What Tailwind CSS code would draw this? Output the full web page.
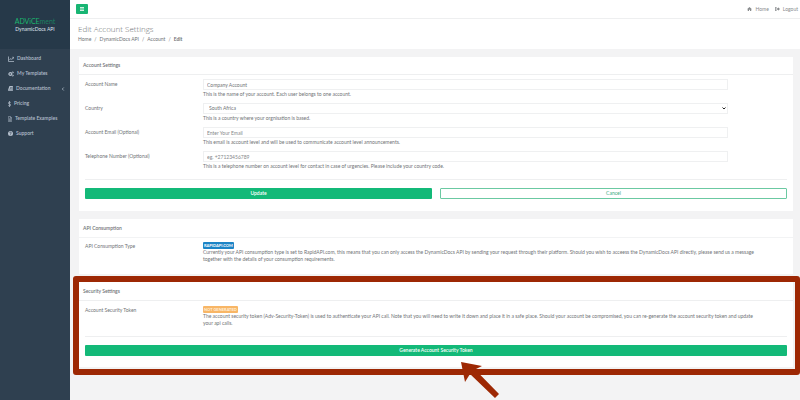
<!DOCTYPE html>
<html lang="en">

<head>
  <meta charset="UTF-8" />
  <meta name="viewport" content="width=device-width, initial-scale=1" />
  <title>Edit Account Settings</title>
  <script src="https://cdn.jsdelivr.net/npm/@tailwindcss/browser@4"></script>
</head>

<body class="flex min-h-screen overflow-x-hidden bg-[#f3f3f4] font-['Lato',sans-serif] text-[5px] leading-[7px] text-[#707376]">

  <!-- Sidebar -->
  <aside class="w-[70px] shrink-0 bg-[#2f4050] text-[#b4bfcc]">
    <div class="flex h-[49px] flex-col items-center justify-center bg-[#263949]">
      <div class="h-2 text-[7px] leading-2 text-[#1ab66e]">ADViCE<span class="text-[#1c8060]">ment</span></div>
      <div class="mt-px text-[#dfe4ed]">DynamicDocs API</div>
    </div>
    <nav class="flex flex-col gap-2 pt-[6px] pr-[5px] pl-2 font-semibold">
      <a href="#" class="flex items-center gap-[3px]">
        <svg class="size-[6px]" viewBox="0 0 12 12" fill="none" stroke="currentColor" stroke-width="1.5"><path d="M1 1v10h11M3 8l2.500-3 2 2L11 3M8.500 2.500H11V5" /></svg>
        Dashboard</a>
      <a href="#" class="flex items-center gap-[3px]">
        <svg class="size-[6px]" viewBox="0 0 12 12" fill="none" stroke="currentColor"><circle cx="4.500" cy="6" r="2.700" stroke-width="2.200" /><circle cx="9.500" cy="3" r="1.400" stroke-width="1.500" /><circle cx="9.500" cy="9" r="1.400" stroke-width="1.500" /></svg>
        My Templates</a>
      <a href="#" class="flex items-center gap-[3px]">
        <svg class="size-[5px]" viewBox="0 0 12 12" fill="currentColor"><path d="M3.500 0H12L9.500 9H2.200q-.8 0-.8.700t.8.700H10L12 3v6l-1 3H2Q0 12 0 9.500ZM5 2.500l-.3 1h4.500l.3-1ZM4.400 4.700l-.3 1h4.500l.3-1Z" fill-rule="evenodd" /></svg>
        Documentation
        <svg class="ml-auto size-[4px]" viewBox="0 0 8 8" fill="none" stroke="currentColor" stroke-width="1.500"><path d="M5.500 1l-3 3 3 3" /></svg></a>
      <a href="#" class="flex items-center gap-[3px]">
        <svg class="h-[6px] w-[3px]" viewBox="0 0 6 12" fill="none" stroke="currentColor" stroke-width="1.400"><path d="M5.300 3.500Q5 2.200 3 2.200T.8 4t2.200 2 2.300 2T3 9.900.7 8.500M3 0v12" /></svg>
        Pricing</a>
      <a href="#" class="flex items-center gap-[3px]">
        <svg class="h-[6px] w-[4px]" viewBox="0 0 9 12" fill="none" stroke="currentColor" stroke-width="1.200"><path d="M.6.600h5L8.400 3.500v7.900H.6ZM5.500.600v3h3M2.500 5.500h4M2.500 7.500h4M2.500 9.500h4" /></svg>
        Template Examples</a>
      <a href="#" class="flex items-center gap-[3px]">
        <svg class="size-[5px]" viewBox="0 0 12 12"><circle cx="6" cy="6" r="6" fill="currentColor" /><path d="M4 4.500Q4.200 2.700 6 2.700T8 4.500 6 6.800v.7M6 8.500V10" fill="none" stroke="#2f4050" stroke-width="1.500" /></svg>
        Support</a>
    </nav>
  </aside>

  <div class="min-w-0 flex-1">
    <!-- Top bar -->
    <header class="flex h-[19px] items-center justify-between border-b border-[#eeeff0] bg-white pr-[2px] pl-[6px]">
      <button type="button" aria-label="Toggle menu" class="flex h-[10px] w-3 items-center justify-center rounded-[1px] bg-[#18b573] text-white">
        <svg class="size-[4px]" viewBox="0 0 8 8" stroke="currentColor" stroke-width="1.600"><path d="M0 1h8M0 4h8M0 7h8" /></svg>
      </button>
      <nav class="flex gap-[6px] text-[#888b8d]">
        <a href="#" class="flex items-center gap-[3px]">
          <svg class="h-[4px] w-[5px]" viewBox="0 0 10 8" fill="currentColor"><path d="M5 0l5 4.500H8.500V8H6V5.500H4V8H1.500V4.500H0Z" /></svg>
          Home</a>
        <a href="#" class="flex items-center gap-[3px]">
          <svg class="h-[4px] w-[5px]" viewBox="0 0 10 8" fill="currentColor"><path d="M4 0H1Q0 0 0 1v6q0 1 1 1h3V7H1.500V1H4ZM6 .5 10 4 6 7.500v-2H3v-3h3Z" /></svg>
          Logout</a>
      </nav>
    </header>

    <!-- Page heading -->
    <div class="h-[30px] bg-white px-2 pt-1">
      <h1 class="font-['Open_Sans',sans-serif] text-[8px] leading-3 font-light">Edit Account Settings</h1>
      <nav aria-label="Breadcrumb" class="mt-px flex gap-[3px]">
        <a href="#">Home</a><span>/</span><a href="#">DynamicDocs API</a><span>/</span><a href="#">Account</a><span>/</span><strong>Edit</strong>
      </nav>
    </div>

    <main class="flex flex-col gap-2 pt-2 pr-[7px] pl-[9px]">
      <!-- Account settings -->
      <section class="bg-white">
        <h2 class="border-b border-[#eeeff0] px-1 pt-[5px] pb-[5px] font-semibold">Account Settings</h2>
        <form class="px-[6px] pt-1 pb-3">
          <div class="grid grid-cols-[118px_1fr] gap-y-[5px] pr-[59px]">
            <label for="name" class="pt-[2px]">Account Name</label>
            <div>
              <input id="name" type="text" value="Company Account" class="block h-[11px] w-full border border-[#eff0f1] px-[3px]" />
              <p class="h-2 leading-2">This is the name of your account. Each user belongs to one account.</p>
            </div>
            <label for="country" class="pt-[2px]">Country</label>
            <div>
              <div class="relative">
                <select id="country" class="block h-[11px] w-full appearance-none border border-[#eff0f1] px-[5px]">
                  <option>South Africa</option>
                </select>
                <svg class="pointer-events-none absolute top-1 right-[2px] h-[3px] w-[4px]" viewBox="0 0 8 6" fill="none" stroke="#222" stroke-width="2"><path d="M1 1l3 3 3-3" /></svg>
              </div>
              <p class="h-2 leading-2">This is a country where your orgnisation is based.</p>
            </div>
            <label for="email" class="pt-[2px]">Account Email (Optional)</label>
            <div>
              <input id="email" type="email" placeholder="Enter Your Email" class="block h-[11px] w-full border border-[#eff0f1] px-[3px] placeholder:text-[#85888a]" />
              <p class="h-2 leading-2">This email is account level and will be used to communicate account level announcements.</p>
            </div>
            <label for="phone" class="pt-[2px]">Telephone Number (Optional)</label>
            <div>
              <input id="phone" type="tel" placeholder="eg. +27123456789" class="block h-[11px] w-full border border-[#eff0f1] px-[3px] placeholder:text-[#85888a]" />
              <p class="h-2 leading-2">This is a telephone number on account level for contact in case of urgencies. Please include your country code.</p>
            </div>
          </div>
          <div class="mt-[9px] grid grid-cols-2 gap-2 border-t border-[#eeeff0] pt-2">
            <button type="submit" class="h-[11px] rounded-[1px] bg-[#13b978] font-semibold text-white">Update</button>
            <button type="button" class="h-[11px] rounded-[1px] border border-[#6bc9a2] text-[#3aac80]">Cancel</button>
          </div>
        </form>
      </section>

      <!-- API consumption -->
      <section class="bg-white">
        <h2 class="border-b border-[#f2f3f4] px-1 pt-[6px] pb-[5px] font-semibold">API Consumption</h2>
        <div class="grid grid-cols-[118px_1fr] px-[6px] pt-1 pb-[11px]">
          <div class="pt-px">API Consumption Type</div>
          <div class="pr-[30px]">
            <span class="block h-[7px] w-fit rounded-[1px] bg-[#1c84c6] px-px text-[4px] leading-[7px] font-bold text-white">RAPIDAPI.COM</span>
            <p>Currently your API consumption type is set to RapidAPI.com, this means that you can only access the DynamicDocs API by sending your request through their platform. Should you wish to acceess the DynamicDocs API directly, please send us a message together with the details of your consumption requirements.</p>
          </div>
        </div>
      </section>

      <!-- Security settings, ringed by the callout -->
      <section class="relative bg-white">
        <h2 class="border-b border-[#eeeff0] px-1 pt-[6px] pb-[5px] font-semibold">Security Settings</h2>
        <div class="px-[6px] pt-[5px] pb-[11px]">
          <div class="grid grid-cols-[118px_1fr]">
            <div class="pt-px">Account Security Token</div>
            <div class="pr-[30px]">
              <span class="block h-[7px] w-fit rounded-[1px] bg-[#f8b666] px-px text-[4px] leading-[7px] font-bold text-[#fff0dc]">NOT GENERATED</span>
              <p>The account security token (Adv-Security-Token) is used to authenticate your API call. Note that you will need to write it down and place it in a safe place. Should your account be compromised, you can re-generate the account security token and update your api calls.</p>
            </div>
          </div>
          <div class="mt-[9px] border-t border-[#eeeff0] pt-2">
            <button type="button" class="block h-[11px] w-full rounded-[1px] bg-[#13b978] font-semibold text-white">Generate Account Security Token</button>
          </div>
        </div>
        <div class="pointer-events-none absolute -top-[6px] -right-[7px] -bottom-2 -left-[6px] rounded-[3px] border-[6px] border-r-[5px] border-[#9d2804]"></div>
        <svg class="pointer-events-none absolute -bottom-[31px] left-[382px] h-9 w-[38px]" viewBox="0 0 38 36" fill="#9d2804"><path d="M0 0 21 4 14 7.500 38 32 34 36 9 12 4 20Z" /></svg>
      </section>
    </main>
  </div>
</body>

</html>
